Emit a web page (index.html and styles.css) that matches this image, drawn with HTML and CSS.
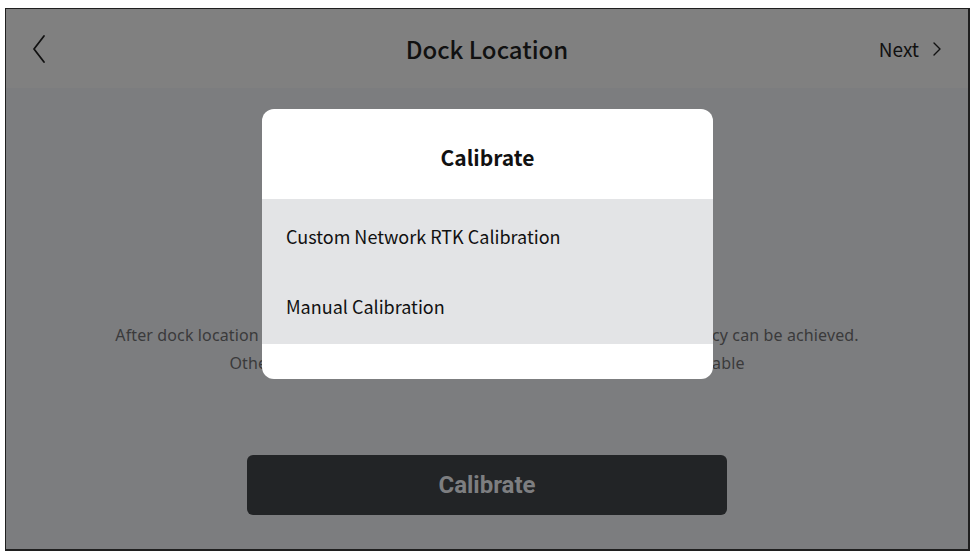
FILE: index.html
```html
<!DOCTYPE html>
<html lang="en">
<head>
<meta charset="utf-8">
<title>Dock Location</title>
<link rel="stylesheet" href="styles.css">
</head>
<body>
<div class="screen">
  <header class="nav">
    <svg class="back" width="14" height="30" viewBox="0 0 14 30"><path d="M12 2 L2 15 L12 28" fill="none" stroke="#111" stroke-width="1.8" stroke-linecap="round" stroke-linejoin="round"/></svg>
    <h1 class="title">Dock Location</h1>
    <div class="next">Next <svg width="10" height="16" viewBox="0 0 10 16"><path d="M2 2 L8 8 L2 14" fill="none" stroke="#111" stroke-width="1.4" stroke-linecap="round" stroke-linejoin="round"/></svg></div>
  </header>
  <main class="content">
    <p class="desc">After dock location calibration is complete, centimeter-level positioning accuracy can be achieved.<br>Otherwise, the dock position may be imprecise and RTK unavailable</p>
    <button class="primary">Calibrate</button>
  </main>
  <div class="dialog">
    <div class="dialog-title">Calibrate</div>
    <ul class="options">
      <li>Custom Network RTK Calibration</li>
      <li>Manual Calibration</li>
    </ul>
  </div>
</div>
</body>
</html>
```
FILE: styles.css
```css
* { box-sizing: border-box; }
html, body { margin: 0; padding: 0; background: #fff; }
body { padding: 8px 6px 9px 5px; height: 560px; }
.screen {
  position: relative;
  height: 543px;
  border: 1px solid #1f1f1f;
  border-width: 1px 2px 2px 1px;
  background: #7c7d7f;
  display: flex;
  flex-direction: column;
  overflow: hidden;
}
.nav {
  height: 79px;
  background: #808080;
  display: flex;
  align-items: center;
  justify-content: space-between;
  padding: 0 26px 0 26px;
  position: relative;
}
.back { display: block; margin-top: 1px; }
.title {
  position: absolute;
  left: 0; right: 0;
  text-align: center;
  margin: 0;
  font: 500 24px "Noto Sans CJK SC", "Noto Sans", sans-serif;
  color: #111;
  pointer-events: none;
}
.next {
  font: 400 19px "Noto Sans CJK SC", "Noto Sans", sans-serif;
  color: #111;
  display: flex;
  align-items: center;
  gap: 13px;
}
.content {
  flex: 1;
  display: flex;
  flex-direction: column;
  align-items: center;
}
.desc {
  margin: 233px 0 0;
  text-align: center;
  font: 400 16px/28px "Noto Sans", sans-serif;
  letter-spacing: 0.12px;
  color: #3a3a3b;
}
.primary {
  margin-top: 78px;
  width: 480px;
  height: 60px;
  border: 0;
  border-radius: 6px;
  background: #222426;
  color: #7d7e80;
  font: 700 24px Roboto, sans-serif;
}
.dialog {
  position: absolute;
  left: 256px;
  top: 100px;
  width: 451px;
  height: 270px;
  background: #fff;
  border-radius: 12px;
  overflow: hidden;
}
.dialog-title {
  height: 90px;
  padding-top: 6px;
  display: flex;
  align-items: center;
  justify-content: center;
  font: 700 21px "Noto Sans CJK SC", "Noto Sans", sans-serif;
  color: #111;
}
.options {
  list-style: none;
  margin: 0;
  padding: 0;
  background: #e3e4e6;
}
.options li {
  height: 72px;
  padding: 0 24px;
  display: flex;
  align-items: center;
  font: 400 18px "Noto Sans CJK SC", "Noto Sans", sans-serif;
  color: #111;
}
.options li:first-child { height: 74px; }
.options li:last-child { height: 71px; align-items: flex-start; padding-top: 20px; }
```
